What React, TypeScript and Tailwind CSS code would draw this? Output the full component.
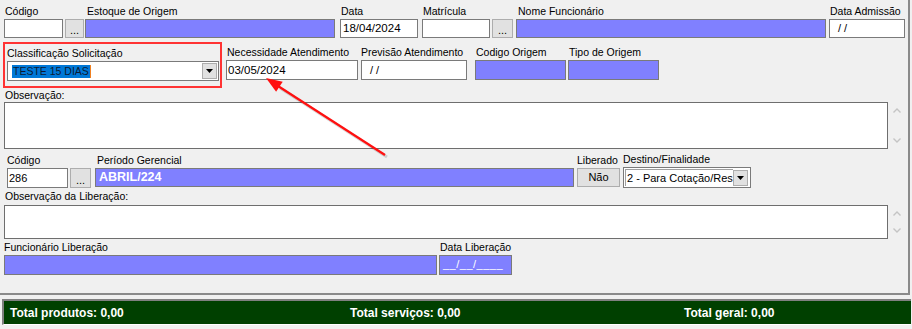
import React from 'react';

function Dots({ className }: { className: string }) {
    return (
        <div className={`flex items-end justify-center bg-[#e1e1e1] border border-[#adadad] text-[11px] leading-[13px] text-black ${className}`}>
            ...
        </div>
    );
}

function DropArrow() {
    return (
        <div className="flex items-center justify-center w-[15px] h-[16px] bg-[#e1e1e1] border border-[#adadad] mr-px">
            <svg width="7" height="4" viewBox="0 0 7 4">
                <polygon points="0,0 7,0 3.5,4" fill="#000" />
            </svg>
        </div>
    );
}

function Chevrons({ h }: { h: string }) {
    return (
        <div className={`flex flex-col justify-between items-center w-[17px] py-[6px] ${h}`}>
            <svg width="8" height="5" viewBox="0 0 8 5">
                <polyline points="0.5,4.5 4,1 7.5,4.5" fill="none" stroke="#c4c4c4" strokeWidth="1.4" />
            </svg>
            <svg width="8" height="5" viewBox="0 0 8 5">
                <polyline points="0.5,0.5 4,4 7.5,0.5" fill="none" stroke="#c4c4c4" strokeWidth="1.4" />
            </svg>
        </div>
    );
}

export default function App() {
    return (
        <div className="relative w-[912px] h-[329px] overflow-hidden bg-[#f0f0f0] text-black text-[10.5px] font-['Liberation_Sans',Arial,sans-serif]">
            {/* painel principal */}
            <div className="w-[910px] h-[295px] border-r-2 border-b-2 border-[#8a8a8a]">
                {/* linha 1 */}
                <div className="flex items-end pl-[4px] pt-[4px]">
                    <div className="flex flex-col w-[59px]">
                        <span className="h-[15px] leading-[15px] pl-[1px]">Código</span>
                        <div className="h-[19px] bg-white border border-[#7a7a7a]" />
                    </div>
                    <Dots className="ml-[2px] w-[19px] h-[19px]" />
                    <div className="flex flex-col w-[250px] ml-[1px]">
                        <span className="h-[15px] leading-[15px] pl-[2px]">Estoque de Origem</span>
                        <div className="h-[19px] bg-[#8080ff] border border-[#7a7a7a]" />
                    </div>
                    <div className="flex flex-col w-[78px] ml-[5px]">
                        <span className="h-[15px] leading-[15px] pl-px">Data</span>
                        <div className="h-[19px] bg-white border border-[#7a7a7a] pl-[2px] text-[11.5px] leading-[17px]">18/04/2024</div>
                    </div>
                    <div className="flex flex-col w-[68px] ml-[4px]">
                        <span className="h-[15px] leading-[15px] pl-px">Matrícula</span>
                        <div className="h-[19px] bg-white border border-[#7a7a7a]" />
                    </div>
                    <Dots className="ml-[2px] w-[21px] h-[19px]" />
                    <div className="flex flex-col w-[310px] ml-[3px]">
                        <span className="h-[15px] leading-[15px] pl-[2px]">Nome Funcionário</span>
                        <div className="h-[19px] bg-[#8080ff] border border-[#7a7a7a]" />
                    </div>
                    <div className="flex flex-col w-[76px] ml-[3px]">
                        <span className="h-[15px] leading-[15px] pl-px">Data Admissão</span>
                        <div className="h-[19px] bg-white border border-[#7a7a7a] pl-[8px] text-[11px] leading-[17px]">/ /</div>
                    </div>
                </div>

                {/* linha 2 */}
                <div className="flex items-start pl-[3px] mt-[4px]">
                    <div className="flex flex-col w-[219px] h-[46px] border-2 border-[#ff3333] pt-[2px] pl-[2px]">
                        <span className="h-[15px] leading-[15px]">Classificação Solicitação</span>
                        <div className="flex items-center w-[212px] h-[20px] bg-white border border-[#7a7a7a]">
                            <span className="ml-[4px] px-px bg-[#0078d7] text-[#0c1a33] text-[10.5px] leading-[13px]">TESTE 15 DIAS</span>
                            <span className="w-px h-[13px] bg-[#f08020]" />
                            <div className="ml-auto">
                                <DropArrow />
                            </div>
                        </div>
                    </div>
                    <div className="flex flex-col w-[132px] ml-[4px] mt-[3px]">
                        <span className="h-[15px] leading-[15px] pl-px">Necessidade Atendimento</span>
                        <div className="h-[20px] bg-white border border-[#7a7a7a] pl-[1px] text-[11.5px] leading-[18px]">03/05/2024</div>
                    </div>
                    <div className="flex flex-col w-[106px] ml-[3px] mt-[3px]">
                        <span className="h-[15px] leading-[15px]">Previsão Atendimento</span>
                        <div className="h-[20px] bg-white border border-[#7a7a7a] pl-[8px] text-[11px] leading-[18px]">/ /</div>
                    </div>
                    <div className="flex flex-col w-[91px] ml-[8px] mt-[3px]">
                        <span className="h-[15px] leading-[15px] pl-px">Codigo Origem</span>
                        <div className="h-[20px] bg-[#8080ff] border border-[#7a7a7a]" />
                    </div>
                    <div className="flex flex-col w-[91px] ml-[2px] mt-[3px]">
                        <span className="h-[15px] leading-[15px] pl-px">Tipo de Origem</span>
                        <div className="h-[20px] bg-[#8080ff] border border-[#7a7a7a]" />
                    </div>
                </div>

                {/* observação */}
                <div className="flex flex-col pl-[4px]">
                    <span className="h-[14px] leading-[14px] pl-px">Observação:</span>
                    <div className="flex">
                        <div className="w-[884px] h-[47px] bg-white border border-[#6e6e6e]" />
                        <Chevrons h="h-[47px]" />
                    </div>
                </div>

                {/* linha liberação */}
                <div className="flex items-start pl-[7px] mt-[3px]">
                    <div className="flex flex-col w-[61px]">
                        <span className="h-[16px] leading-[16px]">Código</span>
                        <div className="h-[20px] bg-white border border-[#7a7a7a] pl-px text-[11px] leading-[18px]">286</div>
                    </div>
                    <Dots className="ml-[2px] mt-[16px] w-[21px] h-[20px]" />
                    <div className="flex flex-col w-[479px] ml-[4px]">
                        <span className="h-[16px] leading-[16px] pl-[2px]">Período Gerencial</span>
                        <div className="h-[19px] bg-[#8080ff] border border-[#7a7a7a] pl-[3px] text-white font-bold text-[12.5px] leading-[17px]">ABRIL/224</div>
                    </div>
                    <div className="flex flex-col w-[43px] ml-[3px]">
                        <span className="h-[16px] leading-[16px] whitespace-nowrap">Liberado</span>
                        <div className="flex items-center justify-center h-[19px] bg-[#e1e1e1] border border-[#adadad] text-[11px]">Não</div>
                    </div>
                    <div className="flex flex-col w-[128px] ml-[3px]">
                        <span className="h-[15px] leading-[15px] whitespace-nowrap">Destino/Finalidade</span>
                        <div className="flex items-center h-[21px] bg-white border border-[#7a7a7a] p-px">
                            <div className="flex items-center flex-1 h-full border-l border-t border-[#a0a0a0] overflow-hidden">
                                <span className="pl-px text-[11px] whitespace-nowrap">2 - Para Cotação/Res</span>
                            </div>
                            <DropArrow />
                        </div>
                    </div>
                </div>

                {/* observação da liberação */}
                <div className="flex flex-col pl-[4px]">
                    <span className="h-[17px] leading-[17px] pl-px">Observação da Liberação:</span>
                    <div className="flex">
                        <div className="w-[884px] h-[34px] bg-white border border-[#6e6e6e]" />
                        <Chevrons h="h-[34px]" />
                    </div>
                </div>

                {/* funcionário liberação */}
                <div className="flex items-start pl-[4px]">
                    <div className="flex flex-col w-[433px]">
                        <span className="h-[16px] leading-[16px]">Funcionário Liberação</span>
                        <div className="h-[20px] bg-[#8080ff] border border-[#7a7a7a]" />
                    </div>
                    <div className="flex flex-col w-[73px] ml-[2px]">
                        <span className="h-[16px] leading-[16px] pl-px whitespace-nowrap">Data Liberação</span>
                        <div className="h-[20px] bg-[#8080ff] border border-[#7a7a7a] pl-[3px] text-white text-[11px] leading-[17px] tracking-[0.5px]">__/__/____</div>
                    </div>
                </div>
            </div>

            {/* totais */}
            <div className="flex items-center ml-[2px] mt-[4px] w-[909px] h-[26px] bg-[#004000] border-t-2 border-l-2 border-[#808080] border-b border-b-white pl-[6px] text-white font-bold text-[12px]">
                <span className="w-[340px]">Total produtos: 0,00</span>
                <span className="w-[334px]">Total serviços: 0,00</span>
                <span>Total geral: 0,00</span>
            </div>

            {/* seta de anotação */}
            <svg className="absolute inset-0 pointer-events-none" width="912" height="329" viewBox="0 0 912 329">
                <line x1="387" y1="157" x2="280" y2="88" stroke="#000" strokeOpacity="0.15" strokeWidth="3" />
                <line x1="385" y1="155" x2="278" y2="86" stroke="#ff1010" strokeWidth="2.2" />
                <polygon points="266,78 276.1,91.8 282.7,81.7" fill="#ff1010" />
            </svg>
        </div>
    );
}
